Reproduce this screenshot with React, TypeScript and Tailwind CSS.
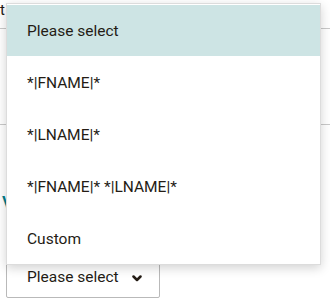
import React from 'react';

const options = ['Please select', '*|FNAME|*', '*|LNAME|*', '*|FNAME|* *|LNAME|*', 'Custom'];

const Chevron = () => (
    <svg width="10" height="7" viewBox="0 0 10 7" fill="none">
        <path d="M1.5 1.5L5 5L8.5 1.5" stroke="#241c15" strokeWidth="2.5" strokeLinecap="round" strokeLinejoin="round" />
    </svg>
);

const App: React.FC = () => {
    return (
        <div className="relative w-[330px] h-[305px] overflow-hidden bg-white text-[#241c15]" style={{ fontFamily: 'Roboto, "Noto Sans", sans-serif' }}>
            {/* page behind the menu */}
            <div className="h-[29px] border-b border-[#c9c9c9] bg-white pt-[1px]">
                <span className="block text-[15px] leading-[18px]">t</span>
            </div>
            <div className="h-[96px] border-b border-[#c9c9c9]" />
            <div className="pt-[70px] pl-[2px]">
                <span className="block text-[18px] leading-[16px] text-[#007c89] font-medium">V</span>
            </div>
            <div className="pl-[6px] pt-[47px]">
                <button className="flex items-center w-[154px] h-[40px] border border-[#b9b9b9] rounded-[2px] bg-white pl-[20px] text-[15.5px]">
                    <span>Please select</span>
                    <span className="ml-[13px] mt-[1px]"><Chevron /></span>
                </button>
            </div>

            {/* open dropdown menu */}
            <ul className="absolute left-[6px] top-[3px] w-[315px] bg-white border border-[#dcdcdc] shadow-[0_3px_10px_rgba(0,0,0,0.18)]">
                {options.map((opt, i) => (
                    <li
                        key={opt}
                        className={`h-[52px] flex items-center pl-[20px] pt-[3px] text-[15.5px] ${i === 0 ? 'bg-[#cde4e4] border-t border-white' : 'bg-white'}`}
                    >
                        {opt}
                    </li>
                ))}
            </ul>
        </div>
    );
};

export default App;
